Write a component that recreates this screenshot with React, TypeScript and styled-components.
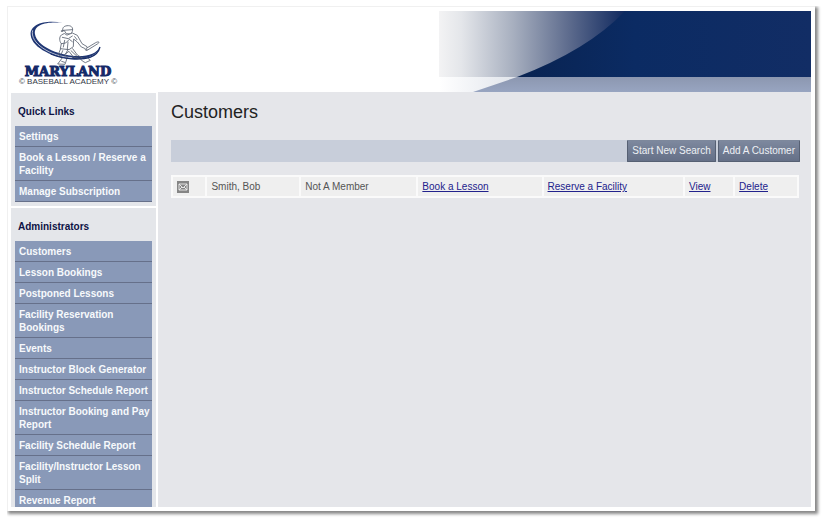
import React from "react";
import styled, { createGlobalStyle } from "styled-components";

const GlobalStyle = createGlobalStyle`
  *, *::before, *::after { box-sizing: border-box; }
  body {
    margin: 0;
    background: #fff;
    font-family: "Liberation Sans", Arial, sans-serif;
    overflow: hidden;
  }
`;

const Frame = styled.div`
  display: flex;
  flex-direction: column;
  height: calc(100vh - 13px);
  margin: 6px 7px 7px;
  padding: 4px 4px 4px 3px;
  border: 1px solid #f0f0f0;
  border-right: 0;
  border-bottom: 0;
  background: #fff;
  box-shadow: 2px 2px 3px 1px #888;
  clip-path: inset(0 -7px -7px 0);
`;

const Header = styled.header`
  display: flex;
  justify-content: space-between;
  flex: none;
  height: 81px;
`;

const Logo = styled.a`
  display: flex;
  flex-direction: column;
  align-items: center;
  width: 114px;
  color: #142a68;
  text-decoration: none;
  white-space: nowrap;
`;

const LogoName = styled.span`
  font: bold 13px/11px "DejaVu Serif", serif;
  -webkit-text-stroke: 1px #142a68;
`;

const LogoTag = styled.span`
  font: 8px/9px "Liberation Sans", Arial, sans-serif;
  color: #333846;
`;

const Banner = styled.svg`
  display: block;
  width: 372px;
  height: 81px;
`;

const Body = styled.div`
  display: flex;
  flex: 1;
  gap: 2px;
  min-height: 0;
`;

const Sidebar = styled.aside`
  display: flex;
  flex-direction: column;
  flex: none;
  gap: 2px;
  width: 145px;
  padding-top: 1px;
  overflow: hidden;
`;

const Panel = styled.nav`
  flex: none;
  padding: 0 4px 4px;
  background: #e4e6ea;
`;

const PanelTitle = styled.h2`
  margin: 0;
  padding: 10px 4px 6px 3px;
  font-size: 10px;
  line-height: 17px;
  color: #0d1245;
`;

const LinkList = styled.ul`
  margin: 0;
  padding: 0;
  list-style: none;
`;

const LinkItem = styled.li`
  border-bottom: 1px solid #66708a;
  background: #8999b8;
`;

const SideLink = styled.a`
  display: block;
  padding: 4px 0 3px 4px;
  font-size: 10px;
  font-weight: bold;
  line-height: 13px;
  color: #f7f9fc;
  text-decoration: none;
`;

const Main = styled.main`
  flex: 1;
  min-width: 0;
  padding: 10px 11px 10px 13px;
  background: #e5e6ea;
`;

const Title = styled.h1`
  margin: 0 0 17px;
  font-size: 18px;
  font-weight: normal;
  line-height: 21px;
  color: #222;
`;

const Toolbar = styled.div`
  display: flex;
  justify-content: flex-end;
  gap: 2px;
  height: 22px;
  margin-bottom: 13px;
  background: #c8ceda;
`;

const ToolButton = styled.button`
  padding: 0 4px;
  border: 1px solid #566073;
  border-top-color: #7d889c;
  border-radius: 1px;
  background: linear-gradient(#7d889e, #657087);
  color: #edf0f4;
  font: 10px/18px "Liberation Sans", Arial, sans-serif;
  white-space: nowrap;
`;

const Table = styled.table`
  width: calc(100% - 1px);
  border-collapse: collapse;
  table-layout: fixed;
  font-size: 10px;
  color: #555;
`;

const Col = styled.col<{ $share: number }>`
  width: ${(p) => p.$share}%;
`;

const Cell = styled.td`
  height: 21px;
  padding: 0 4px;
  border: 2px solid #fafafa;
  background: #efefef;
  line-height: 15px;
  white-space: nowrap;
`;

const CellLink = styled.a`
  color: #22228c;
  text-decoration: underline;
`;

const MailButton = styled.button`
  display: block;
  width: 12px;
  height: 12px;
  padding: 0;
  border: 0;
  background: none;
`;

const quickLinks = ["Settings", "Book a Lesson / Reserve a Facility", "Manage Subscription"];

const adminLinks = [
  "Customers",
  "Lesson Bookings",
  "Postponed Lessons",
  "Facility Reservation Bookings",
  "Events",
  "Instructor Block Generator",
  "Instructor Schedule Report",
  "Instructor Booking and Pay Report",
  "Facility Schedule Report",
  "Facility/Instructor Lesson Split",
  "Revenue Report",
];

const columns = [5.5, 15, 18.7, 20, 22.6, 8, 10.2];

const Batter = () => (
  <svg width="110" height="55" viewBox="0 0 330 165" fill="none" aria-hidden="true">
    <path
      d="M150 36 C100 26 50 38 53 72 C57 112 126 143 184 144 C226 145 251 133 261 108 C251 127 226 137 187 135 C132 132 72 105 66 70 C61 39 105 31 150 36Z"
      fill="#203774"
    />
    <path d="M59 58 C49 95 112 137 178 140" stroke="#fff" strokeWidth="2" />
    <g stroke="#596170" strokeWidth="2.5" strokeLinejoin="round" strokeLinecap="round">
      <path d="M149 60 C147 48 155 44 166 44 C176 44 181 51 178 61 L174 69 L160 68 L154 59 L145 60Z M151 58 L178 56" fill="#fff" />
      <path d="M153 68 L145 72 C138 78 139 91 145 98 L142 113 L168 116 L181 107 L182 84 L193 93 L205 108 L215 112 L219 119 L225 115 L222 107 L207 98 L193 73 L178 66 L163 72Z" fill="#fff" />
      <path d="M145 98 L158 96 L169 85 L178 92 M148 79 L166 83 L178 75 M155 88 L151 108 M165 93 L163 114 M185 77 L192 86" />
      <path d="M220 112 L248 95 C257 90 262 94 253 99 L224 117Z" fill="#fff" />
      <path d="M143 113 L136 130 L148 140 L141 150 L134 159 L156 160 L163 139 L154 131 L168 121 L182 139 L202 143 L208 150 L217 155 L232 148 L224 141 L210 142 L193 132 L179 113" />
      <path d="M149 119 L145 129 M165 115 L158 129 M174 119 L192 136 M146 151 L155 154" />
    </g>
    <path d="M113 129 C151 146 204 148 231 139 C248 133 257 123 261 108" stroke="#172d68" strokeWidth="4" />
  </svg>
);

const HeaderBanner = () => (
  <Banner viewBox="0 0 372 81" preserveAspectRatio="none" aria-hidden="true">
    <defs>
      <linearGradient id="fade">
        <stop offset="0" stopColor="#f3f3f4" />
        <stop offset="0.12" stopColor="#e4e6ea" />
        <stop offset="0.4" stopColor="#a7afbf" />
        <stop offset="0.7" stopColor="#5d6b8d" />
        <stop offset="1" stopColor="#10295f" />
      </linearGradient>
      <linearGradient id="navy">
        <stop offset="0" stopColor="#092351" />
        <stop offset="0.4" stopColor="#0b2b63" />
        <stop offset="1" stopColor="#122d65" />
      </linearGradient>
      <linearGradient id="strip">
        <stop offset="0" stopColor="#fff" />
        <stop offset="1" stopColor="#e0e4eb" />
      </linearGradient>
      <linearGradient id="band" x1="0" y1="0" x2="0" y2="1">
        <stop offset="0" stopColor="#8c97b0" />
        <stop offset="1" stopColor="#98a5c1" />
      </linearGradient>
    </defs>
    <rect width="186" height="66" fill="url(#fade)" />
    <path d="M186 0 H372 V66 H78 Q149 39 186 0Z" fill="url(#navy)" />
    <rect y="66" width="78" height="15" fill="url(#strip)" />
    <path d="M78 66 H372 V81 H34Z" fill="url(#band)" />
  </Banner>
);

const MailIcon = () => (
  <svg width="12" height="12" viewBox="0 0 12 12" fill="none" aria-hidden="true">
    <rect width="12" height="12" fill="#858585" />
    <path d="M2 3 H10 V9 H2Z M2 3 L6 7 L10 3 M2 9 L5 6 M10 9 L7 6" stroke="#eee" strokeWidth="0.9" />
  </svg>
);

const LinkPanel = ({ title, links }: { title: string; links: string[] }) => (
  <Panel aria-label={title}>
    <PanelTitle>{title}</PanelTitle>
    <LinkList>
      {links.map((label) => (
        <LinkItem key={label}>
          <SideLink href="#">{label}</SideLink>
        </LinkItem>
      ))}
    </LinkList>
  </Panel>
);

export default function App() {
  return (
    <>
      <GlobalStyle />
      <Frame>
        <Header>
          <Logo href="#">
            <Batter />
            <LogoName>MARYLAND</LogoName>
            <LogoTag>© BASEBALL ACADEMY ©</LogoTag>
          </Logo>
          <HeaderBanner />
        </Header>
        <Body>
          <Sidebar>
            <LinkPanel title="Quick Links" links={quickLinks} />
            <LinkPanel title="Administrators" links={adminLinks} />
          </Sidebar>
          <Main>
            <Title>Customers</Title>
            <Toolbar>
              <ToolButton type="button">Start New Search</ToolButton>
              <ToolButton type="button">Add A Customer</ToolButton>
            </Toolbar>
            <Table>
              <colgroup>
                {columns.map((share, i) => (
                  <Col key={i} $share={share} />
                ))}
              </colgroup>
              <tbody>
                <tr>
                  <Cell>
                    <MailButton type="button" aria-label="Send email">
                      <MailIcon />
                    </MailButton>
                  </Cell>
                  <Cell>Smith, Bob</Cell>
                  <Cell>Not A Member</Cell>
                  <Cell><CellLink href="#">Book a Lesson</CellLink></Cell>
                  <Cell><CellLink href="#">Reserve a Facility</CellLink></Cell>
                  <Cell><CellLink href="#">View</CellLink></Cell>
                  <Cell><CellLink href="#">Delete</CellLink></Cell>
                </tr>
              </tbody>
            </Table>
          </Main>
        </Body>
      </Frame>
    </>
  );
}
